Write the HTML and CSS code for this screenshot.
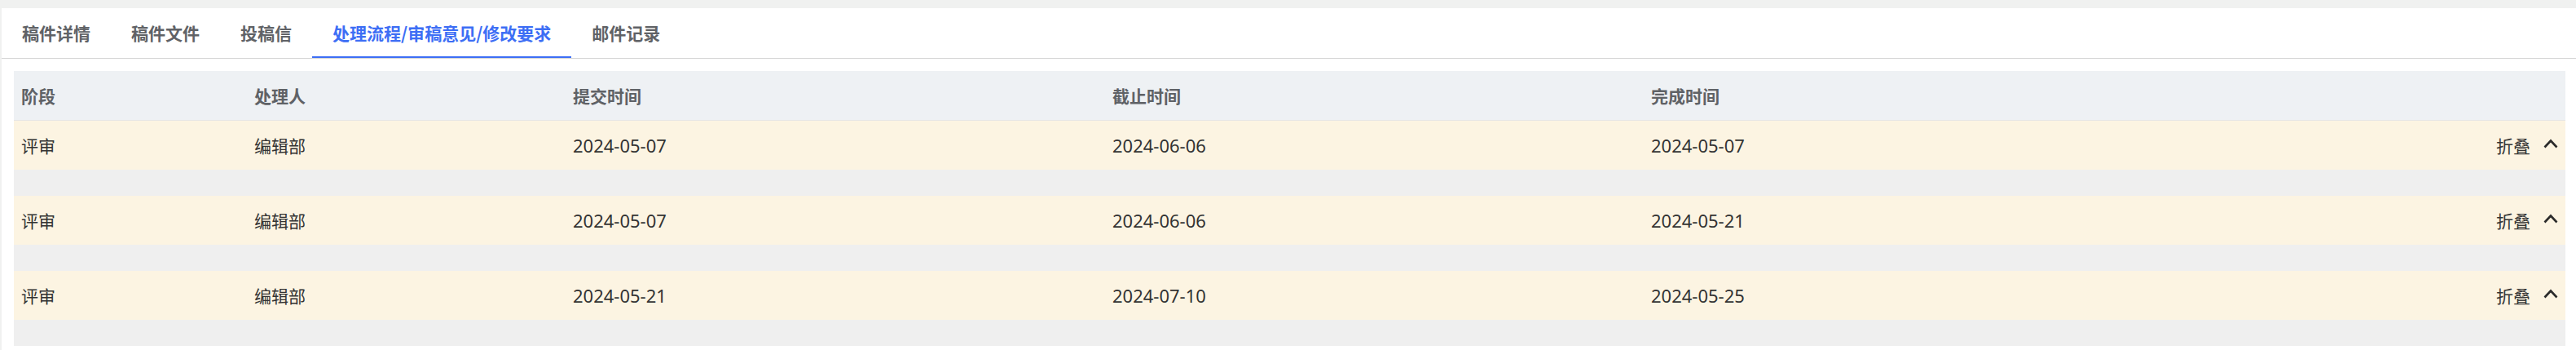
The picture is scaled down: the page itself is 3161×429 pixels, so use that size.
FILE: index.html
```html
<!DOCTYPE html>
<html lang="zh-CN">
<head>
<meta charset="utf-8">
<title>处理流程</title>
<link rel="stylesheet" href="styles.css">
</head>
<body>
<div class="panel">
  <div class="tabs">
    <div class="tab">稿件详情</div>
    <div class="tab">稿件文件</div>
    <div class="tab">投稿信</div>
    <div class="tab active">处理流程/审稿意见/修改要求</div>
    <div class="tab">邮件记录</div>
  </div>
  <div class="table">
    <div class="row head">
      <div class="cell">阶段</div>
      <div class="cell">处理人</div>
      <div class="cell">提交时间</div>
      <div class="cell">截止时间</div>
      <div class="cell">完成时间</div>
      <div class="cell"></div>
    </div>
    <div class="row data">
      <div class="cell">评审</div>
      <div class="cell">编辑部</div>
      <div class="cell num">2024-05-07</div>
      <div class="cell num">2024-06-06</div>
      <div class="cell num">2024-05-07</div>
      <div class="cell action">折叠<svg class="chev" width="18" height="12" viewBox="0 0 18 12"><polyline points="1.5,10.5 9,2.5 16.5,10.5" fill="none" stroke="#2b2b2b" stroke-width="2.6"/></svg></div>
    </div>
    <div class="spacer"></div>
    <div class="row data">
      <div class="cell">评审</div>
      <div class="cell">编辑部</div>
      <div class="cell num">2024-05-07</div>
      <div class="cell num">2024-06-06</div>
      <div class="cell num">2024-05-21</div>
      <div class="cell action">折叠<svg class="chev" width="18" height="12" viewBox="0 0 18 12"><polyline points="1.5,10.5 9,2.5 16.5,10.5" fill="none" stroke="#2b2b2b" stroke-width="2.6"/></svg></div>
    </div>
    <div class="spacer"></div>
    <div class="row data">
      <div class="cell">评审</div>
      <div class="cell">编辑部</div>
      <div class="cell num">2024-05-21</div>
      <div class="cell num">2024-07-10</div>
      <div class="cell num">2024-05-25</div>
      <div class="cell action">折叠<svg class="chev" width="18" height="12" viewBox="0 0 18 12"><polyline points="1.5,10.5 9,2.5 16.5,10.5" fill="none" stroke="#2b2b2b" stroke-width="2.6"/></svg></div>
    </div>
    <div class="spacer"></div>
  </div>
</div>
</body>
</html>
```
FILE: styles.css
```css
html, body {
  margin: 0;
  padding: 0;
  background: #f0f1f0;
}
body {
  font-family: "Noto Sans", "Noto Sans CJK SC", sans-serif;
  font-size: 21px;
  color: #333333;
}
.panel {
  margin: 10px 0 0 2px;
  background: #ffffff;
  min-height: 419px;
  padding: 0 13px 0 15px;
  box-sizing: border-box;
}
.tabs {
  display: flex;
  border-bottom: 1px solid #d4d4d4;
  margin: 0 -13px 0 -15px;
}
.tab {
  height: 61px;
  line-height: 61px;
  padding: 0 25px;
  font-weight: 700;
  color: #606266;
  font-family: "Noto Sans CJK SC", sans-serif;
}
.tab.active {
  color: #3d6ef5;
  box-shadow: inset 0 -2px 0 #3d6ef5;
}
.table {
  margin-top: 15px;
}
.row {
  display: grid;
  grid-template-columns: 286px 391px 662px 661px 1fr auto;
  align-items: center;
  height: 60px;
}
.cell {
  padding-left: 9px;
  white-space: nowrap;
}
.num {
  font-size: 22px;
}
.head {
  background: #eef1f4;
  border-bottom: 1px solid #e6e6e6;
  font-weight: 700;
  color: #5f6266;
  font-family: "Noto Sans CJK SC", sans-serif;
}
.data {
  background: #fcf4e2;
}
.spacer {
  height: 32px;
  background: #efefef;
}
.action {
  display: flex;
  align-items: center;
  gap: 16px;
  padding-right: 9px;
  font-family: "Noto Sans CJK SC", sans-serif;
}
.chev {
  display: block;
  margin-top: -4px;
}
```
